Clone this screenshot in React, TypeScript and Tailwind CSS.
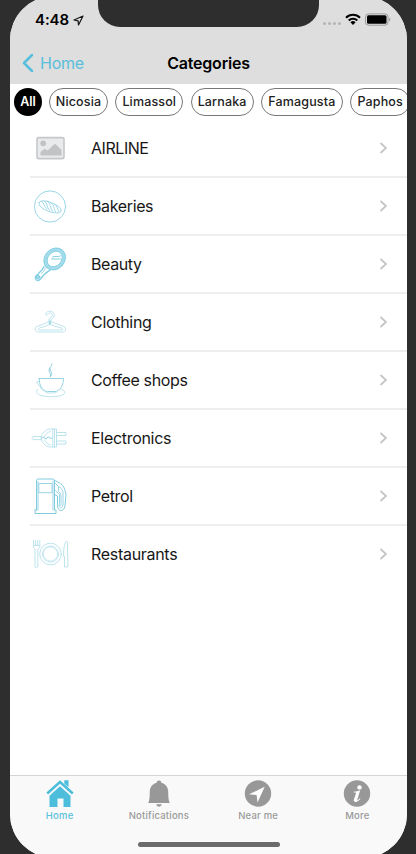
import type { ReactNode } from 'react';

const chips = [
  { label: 'Nicosia', width: 'w-[59px]' },
  { label: 'Limassol', width: 'w-[68px]' },
  { label: 'Larnaka', width: 'w-[63px]' },
  { label: 'Famagusta', width: 'w-[82px]' },
  { label: 'Paphos', width: 'w-[60px]' },
];

function LineIcon({ children, faint = false }: { children: ReactNode; faint?: boolean }) {
  return (
    <svg
      width="40"
      height="40"
      viewBox="0 0 40 40"
      fill="none"
      stroke={faint ? '#b5e0eb' : '#8fd0e2'}
      strokeWidth="0.9"
      strokeLinecap="round"
      strokeLinejoin="round"
    >
      {children}
    </svg>
  );
}

const rows: { label: string; icon: ReactNode; spacing: string }[] = [
  {
    label: 'AIRLINE',
    spacing: 'tracking-[-0.45px]',
    icon: (
      <svg width="40" height="40" viewBox="0 0 40 40">
        <rect x="7" y="8.600" width="27" height="21" rx="1.500" fill="#e9eaec" stroke="#c6c7c9" strokeWidth="1.600" />
        <circle cx="13.200" cy="14.300" r="2.900" fill="#c2c3c5" />
        <path d="M10.500 26.500V23l4.200-3.200 3 1.600 7.300-6.900 6.500 6.600v5.400z" fill="#c2c3c5" />
      </svg>
    ),
  },
  {
    label: 'Bakeries',
    spacing: 'tracking-[-0.37px]',
    icon: (
      <LineIcon>
        <circle cx="20" cy="19.500" r="15.600" />
        <path d="M9.200 15.500c1-2.400 6-2.200 12 .2 6 2.300 10.500 5.500 9.800 8.300-.9 2.700-7 2.300-12.500.3-6-2.200-10.500-5.500-9.300-8.800z" />
        <path d="M11.500 14.500c3 1.500 2 4 5.500 7.500M14.500 14.300c3 1.500 1.500 4.500 5 9M18 14.700c3 1.500 1.500 5 4.500 9.800M21.500 16c3 1.500 1.500 4.500 4 8.800M25.500 17.700c2 1.500 1 3.500 3.500 6.800" strokeWidth="0.800" />
      </LineIcon>
    ),
  },
  {
    label: 'Beauty',
    spacing: 'tracking-[-0.400px]',
    icon: (
      <LineIcon>
        <ellipse cx="24.700" cy="14" rx="8.500" ry="10.200" transform="rotate(42 24.700 14)" stroke="#a5dceb" strokeWidth="3.600" />
        <ellipse cx="24.700" cy="14" rx="10" ry="11.700" transform="rotate(42 24.700 14)" stroke="#85cfe2" />
        <ellipse cx="24.700" cy="14" rx="6.800" ry="8.500" transform="rotate(42 24.700 14)" stroke="#85cfe2" />
        <path d="M14 21.500c-1.300 3.500-4.500 6-7.600 9-3 3.200 1 6.800 4.100 3.600 2.500-4 5.500-6.600 9.500-9" stroke="#85cfe2" strokeWidth="1.400" />
        <path d="M16.500 22c-2.500 2-1.500 4-5 6.500" />
        <circle cx="8" cy="32" r="1.800" fill="#a5dceb" stroke="#76c9df" />
        <path d="M22.500 12c2.500-1.500 5 .5 8-1M21.500 14h9" stroke="#76c9df" />
      </LineIcon>
    ),
  },
  {
    label: 'Clothing',
    spacing: 'tracking-[-0.3px]',
    icon: (
      <LineIcon faint>
        <path d="M19 18.500v-2.500c0-1.500 3.300-1.500 3.300-3.800 0-2.700-4.300-2.900-4.800-.4-.3.800-2 .6-1.800-.6.600-4.300 8.600-4 8.600 1 0 3.300-3.600 3.600-3.600 4.800v1.500" />
        <path d="M18.500 18.500c-3 2-7.500 3.500-11.500 5-2.800 1.400-2.200 5.500 1.300 5.500h24.400c3.400 0 4-4.100 1.200-5.500-4-1.500-9.300-3-12.300-5z" />
        <path d="M20 21.300c-3.500 1.700-7.500 2.800-10.800 3.900-1.500.8-1.200 1.800.3 1.800h22c1.500 0 1.700-1 .2-1.800-3.600-1.200-8.200-2.200-11.700-3.900z" />
        <circle cx="19.800" cy="19.800" r="0.800" stroke="#78cadd" />
      </LineIcon>
    ),
  },
  {
    label: 'Coffee shops',
    spacing: 'tracking-[-0.370px]',
    icon: (
      <LineIcon faint>
        <path d="M9.200 17.500h24.300c0 8.500-5 13-8.500 13h-7.500c-4.500 0-8.300-5-8.300-13z" stroke="#88cfe1" />
        <path d="M8.500 20.500l-2 .5 4 5.500c1 2 3 3.500 5.500 4M8 28.500c-3 1.500-1.500 4.800 3 6 5 1.500 16 1.500 20.500 0 4.500-1.700 5-4.700-.5-6M16 31.500c3 1 8 .7 11-.5" />
        <path d="M20.500 15.500c1.200-3.500-2.500-4.300-1.300-7.500.5-2 3-2.800 2.800-5M20.500 15.500c3.200-3.500-.8-4.800 0-7.500" stroke="#80c8da" />
      </LineIcon>
    ),
  },
  {
    label: 'Electronics',
    spacing: 'tracking-[-0.3px]',
    icon: (
      <LineIcon faint>
        <path d="M3.500 17.600h8v3h-8c-2 0-2-3 0-3zM11.500 17c1.500-4 5-7 9-7h6v18h-6c-4 0-7.500-3-9-7z" />
        <path d="M22.800 10v18M24.500 10v18M14.500 17.500c1-2.500 3.200-4.500 6-5M14.500 21c1 2.500 3.200 4.500 6 5M26.500 13.500h9.500v3h-9.500M26.500 22h9.500v3h-9.500" />
        <path d="M12 19c2-3 3.500 3 5 0s3 2 5 0" stroke="#73c7db" />
      </LineIcon>
    ),
  },
  {
    label: 'Petrol',
    spacing: 'tracking-[-0.360px]',
    icon: (
      <LineIcon>
        <path d="M6.500 33V4c0-1.500.5-2 2-2h14c1.500 0 2 .5 2 2v29h1.500v3.500h-21V33zM24.500 3.500c4.500 1.500 9.500 4.500 10.500 10l1 4-1 11.500c-1 6-7.500 6-7.500-.5V19l-3-1.500" stroke="#72c5db" />
        <path d="M9.200 6.500H22v9.200H9.200zM8 33V4.500M23 33V4M25 6l3.500 3.500v4c0 2 2.500 2.500 2.500 5v8c0 2.500-1.500 2.500-1.500 0v-9l-4-4" />
        <path d="M28.500 9.500c2.500 1 4 3 4.500 6v12.500c-.5 3.500-4 3.500-4 0" />
      </LineIcon>
    ),
  },
  {
    label: 'Restaurants',
    spacing: 'tracking-[-0.3px]',
    icon: (
      <LineIcon faint>
        <circle cx="20.500" cy="19" r="10.800" />
        <circle cx="20.500" cy="19" r="8" />
        <circle cx="20.500" cy="19" r="7" strokeWidth="0.600" />
        <path d="M3.500 5.500v6c0 2 1 2 1.500 2.500V31.500c0 1.500 2.800 1.500 2.800 0V14c1.200-.5 2-1 2-2.500v-6M5.500 5.500v5M7.700 5.500v5M3.500 10.500h6M37.500 32h-3V21.500h-1c0-6 .5-12 2.500-15 1.500 0 1.500 0 1.500 2z" />
      </LineIcon>
    ),
  },
];

const tabs: { label: string; active?: boolean; icon: ReactNode }[] = [
  {
    label: 'Home',
    active: true,
    icon: (
      <svg width="28" height="28" viewBox="0 0 28 28" fill="#4cbedb">
        <path d="M18.300 .3H22.500v7l-4.200-3.700z" />
        <path d="M1.200 13.500L14 2l12.800 11.500" fill="none" stroke="#4cbedb" strokeWidth="2.500" />
        <path d="M14 6.300l10.500 9.400v11.300h-7v-8.500h-6v8.500H3.500V15.700z" />
      </svg>
    ),
  },
  {
    label: 'Notifications',
    icon: (
      <svg width="28" height="28" viewBox="0 0 28 28" fill="#989898">
        <path d="M14 .4c1.400 0 2.300.9 2.300 2.300 4.500 1.100 6.700 4.600 6.900 8.700.1 5.300.1 8.200 1.500 11.600H3.300c1.400-3.400 1.400-6.300 1.500-11.600.2-4.100 2.400-7.600 6.900-8.700 0-1.400.9-2.300 2.300-2.300zM11.200 24.200h5.600c-.6 3.300-5 3.300-5.600 0z" />
      </svg>
    ),
  },
  {
    label: 'Near me',
    icon: (
      <svg width="28" height="28" viewBox="0 0 28 28">
        <circle cx="14" cy="13.500" r="13.200" fill="#989898" />
        <path d="M20.700 6.800L5 14.300l7.600.8.900 7.400z" fill="#fff" />
      </svg>
    ),
  },
  {
    label: 'More',
    icon: (
      <svg width="28" height="28" viewBox="0 0 28 28">
        <circle cx="14" cy="13.500" r="13.200" fill="#989898" />
        <circle cx="16.500" cy="7.400" r="2.200" fill="#fff" />
        <path d="M10.700 11.700c2.200-.2 4.300-.9 6.500-1.500l-2.900 9.500c-.2.900.6.700 2.400-1.500l.8.600c-2.300 3.600-7.300 4.300-6.700 1l2.200-6.500c.2-.9-.5-1-2.300-.8z" fill="#fff" />
      </svg>
    ),
  },
];

export default function App() {
  return (
    <div className="h-[854px] w-[416px] overflow-hidden bg-[#2e2e2e] pl-[10px] font-['Inter','Liberation_Sans',sans-serif] text-black">
      <div className="-mt-1 flex h-[862px] w-[397px] flex-col overflow-hidden rounded-[44px] bg-white pt-1">
        <header className="-mt-1 h-[88px] shrink-0 bg-[#dedede] pt-1">
          <div className="flex h-[42px] items-start">
            <div className="flex w-[88px] items-center gap-[3px] pl-[25px] pt-[10px]">
              <span className="w-[35px] whitespace-nowrap text-[15px] font-semibold leading-5 tracking-[-0.1px]">4:48</span>
              <svg className="shrink-0" width="11" height="11" viewBox="0 0 11 11" fill="none" stroke="#151515" strokeWidth="1.200" strokeLinejoin="round">
                <path d="M10 1L1 5l4.100.9.400 4.100z" />
              </svg>
            </div>
            <div className="h-[27px] w-[221px] rounded-b-[22px] bg-[#2e2e2e]" />
            <div className="flex items-start pl-[4px] pt-[13px]">
              <div className="flex gap-[2px] pt-[9px]">
                <i className="h-[3px] w-[3px] rounded-full bg-[#b5b5b5]" />
                <i className="h-[3px] w-[3px] rounded-full bg-[#b5b5b5]" />
                <i className="h-[3px] w-[3px] rounded-full bg-[#b5b5b5]" />
                <i className="h-[3px] w-[3px] rounded-full bg-[#b5b5b5]" />
              </div>
              <svg className="ml-[4px]" width="16" height="12" viewBox="0 0 16 12" fill="none" stroke="#000" strokeWidth="2">
                <path d="M1 4.700a10 10 0 0 1 14 0M3.700 7.500a6.200 6.200 0 0 1 8.600 0" />
                <path d="M8 12L5.400 9.300a3.800 3.800 0 0 1 5.200 0z" fill="#000" stroke="none" />
              </svg>
              <svg className="ml-[4px]" width="26" height="13" viewBox="0 0 26 13">
                <rect x="0.500" y="0.900" width="22.500" height="11.300" rx="3" fill="none" stroke="#999" />
                <rect x="2" y="2.300" width="19.500" height="8.500" rx="1.500" />
                <path d="M24.200 4.500c1.600.6 1.600 3.400 0 4z" fill="#999" />
              </svg>
            </div>
          </div>
          <div className="grid h-[42px] grid-cols-[1fr_auto_1fr] items-center">
            <div className="flex items-center pl-[12px] text-[#57bfdb]">
              <svg width="12" height="20" viewBox="0 0 12 20" fill="none" stroke="currentColor" strokeWidth="2.500" strokeLinecap="round" strokeLinejoin="round">
                <path d="M10 2L2 10l8 8" />
              </svg>
              <span className="ml-[6px] text-[16px] leading-5 tracking-[-0.250px]">Home</span>
            </div>
            <h1 className="text-[16px] font-semibold leading-5 tracking-[-0.200px]">Categories</h1>
            <span />
          </div>
        </header>

        <div className="flex h-[36px] shrink-0 gap-[7.500px] overflow-hidden pl-[4px] pt-[4px]">
          <button className="h-[28px] w-[28px] shrink-0 rounded-full bg-black pt-px text-[12.500px] font-semibold text-white">All</button>
          <div className="-ml-[0.500px] flex shrink-0 gap-[7.300px]">
            {chips.map((chip) => (
              <button key={chip.label} className={`${chip.width} h-[28px] shrink-0 whitespace-nowrap rounded-full border border-[#777] pt-px text-[12.500px] font-medium tracking-[0.150px] text-[#222]`}>
                {chip.label}
              </button>
            ))}
          </div>
        </div>

        <ul className="flex-1 pl-[20px]">
          {rows.map((row, i) => (
            <li key={row.label} className={`flex h-[58px] items-center ${i < rows.length - 1 ? 'border-b-2 border-[#eeeeee]' : 'pb-[2px]'}`}>
              <div className="mt-[2px] h-[40px] w-[40px]">{row.icon}</div>
              <span className={`ml-[21px] flex-1 text-[16px] leading-5 text-[#171717] ${row.spacing}`}>{row.label}</span>
              <svg className="mr-[19px]" width="9" height="12" viewBox="0 0 9 12" fill="none" stroke="#c4c4c4" strokeWidth="1.700">
                <path d="M1.500 1L7 6l-5.500 5" />
              </svg>
            </li>
          ))}
        </ul>

        <footer className="flex h-[83px] shrink-0 flex-col border-t border-[#d4d4d4] bg-[#f9f9f9]">
          <nav className="grid h-[66px] grid-cols-4">
            {tabs.map((tab) => (
              <div key={tab.label} className="flex flex-col items-center pt-[4px]">
                {tab.icon}
                <span className={`mt-px text-[9.500px] font-medium leading-[13px] tracking-[0.200px] ${tab.active ? 'text-[#5bc2dc]' : 'text-[#999]'}`}>{tab.label}</span>
              </div>
            ))}
          </nav>
          <div className="mx-auto h-[5px] w-[142px] rounded-full bg-[#6b6b6b]" />
        </footer>
      </div>
    </div>
  );
}
